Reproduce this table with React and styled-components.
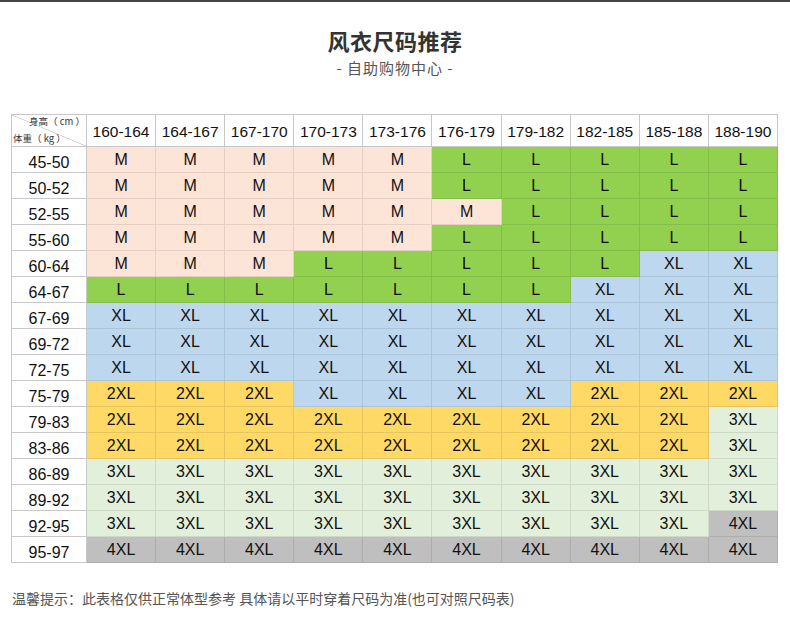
import styled, { createGlobalStyle } from "styled-components"

const GlobalStyle = createGlobalStyle`
  body {
    margin: 0;
    background: #fff;
    font-family: "Liberation Sans", Arial, "Noto Sans CJK SC", sans-serif;
    color: #111;
  }
`

const Page = styled.div`
  width: 790px;
  height: 639px;
  border-top: 2px solid #444;
  box-sizing: border-box;
  display: flex;
  flex-direction: column;
  overflow: hidden;
`

const Heading = styled.div`
  display: flex;
  flex-direction: column;
  align-items: center;
  padding-top: 25px;
  height: 82px;
  box-sizing: border-box;
`

const Title = styled.h1`
  margin: 0;
  font-family: "Noto Sans CJK SC", sans-serif;
  font-size: 22px;
  line-height: 26px;
  font-weight: 700;
  color: #333;
  letter-spacing: 0.5px;
`

const Subtitle = styled.div`
  margin-top: 5px;
  font-family: "Noto Sans CJK SC", sans-serif;
  font-size: 15px;
  line-height: 20px;
  color: #555;
  letter-spacing: 1px;
  white-space: pre;
`

const Table = styled.div`
  margin: 30px 0 0 11px;
  width: 767px;
  display: grid;
  grid-template-columns: 75px repeat(10, 1fr);
  grid-template-rows: 32px repeat(16, 26px);
  border-top: 1px solid #c8c8c8;
  border-left: 1px solid #c8c8c8;
  box-sizing: border-box;
`

const Cell = styled.div`
  box-sizing: border-box;
  border-right: 1px solid ${p => (p.$bg ? "rgba(0,0,0,0.09)" : "#c8c8c8")};
  border-bottom: 1px solid ${p => (p.$bg ? "rgba(0,0,0,0.09)" : "#c8c8c8")};
  background: ${p => p.$bg || "#fff"};
  display: flex;
  justify-content: center;
  align-items: center;
  font-size: 16px;
  line-height: 18px;
  color: #111;
`

const HeadCell = styled(Cell)`
  font-size: 15.5px;
  padding-top: 2px;
`

const RowLabel = styled(Cell)`
  align-items: flex-end;
`

const Corner = styled.div`
  box-sizing: border-box;
  border-right: 1px solid #c8c8c8;
  border-bottom: 1px solid #c8c8c8;
  background: linear-gradient(
    to top right,
    transparent calc(50% - 0.6px),
    #c4c4c4,
    transparent calc(50% + 0.6px)
  );
  display: flex;
  flex-direction: column;
  justify-content: space-between;
  padding: 0 1px 1px 1px;
  font-family: "Noto Sans CJK SC", sans-serif;
  font-size: 9.5px;
  line-height: 13px;
  color: #333;
  white-space: pre;
`

const CornerTop = styled.span`
  align-self: flex-end;
`

const CornerBottom = styled.span`
  align-self: flex-start;
`

const Note = styled.div`
  margin: 25px 0 0 12px;
  font-family: "Noto Sans CJK SC", sans-serif;
  font-size: 14px;
  line-height: 20px;
  color: #555;
`

const colors = {
  M: "#fce4d6",
  L: "#92d050",
  XL: "#bdd7ee",
  "2XL": "#ffd966",
  "3XL": "#e2efda",
  "4XL": "#bfbfbf",
}

const heights = [
  "160-164", "164-167", "167-170", "170-173", "173-176",
  "176-179", "179-182", "182-185", "185-188", "188-190",
]

const rep = (s, n) => Array(n).fill(s)

const rows = [
  ["45-50", [...rep("M", 5), ...rep("L", 5)]],
  ["50-52", [...rep("M", 5), ...rep("L", 5)]],
  ["52-55", [...rep("M", 6), ...rep("L", 4)]],
  ["55-60", [...rep("M", 5), ...rep("L", 5)]],
  ["60-64", [...rep("M", 3), ...rep("L", 5), ...rep("XL", 2)]],
  ["64-67", [...rep("L", 7), ...rep("XL", 3)]],
  ["67-69", rep("XL", 10)],
  ["69-72", rep("XL", 10)],
  ["72-75", rep("XL", 10)],
  ["75-79", [...rep("2XL", 3), ...rep("XL", 4), ...rep("2XL", 3)]],
  ["79-83", [...rep("2XL", 9), "3XL"]],
  ["83-86", [...rep("2XL", 9), "3XL"]],
  ["86-89", rep("3XL", 10)],
  ["89-92", rep("3XL", 10)],
  ["92-95", [...rep("3XL", 9), "4XL"]],
  ["95-97", rep("4XL", 10)],
]

function App() {
  return (
    <Page>
      <GlobalStyle />
      <Heading>
        <Title>风衣尺码推荐</Title>
        <Subtitle>- 自助购物中心 -</Subtitle>
      </Heading>

      <Table>
        <Corner>
          <CornerTop>身高（ cm ）</CornerTop>
          <CornerBottom>体重（ kg ）</CornerBottom>
        </Corner>
        {heights.map(h => (
          <HeadCell key={h}>{h}</HeadCell>
        ))}
        {rows.map(([w, sizes]) => [
          <RowLabel key={w}>{w}</RowLabel>,
          ...sizes.map((s, i) => (
            <Cell key={w + i} $bg={colors[s]}>{s}</Cell>
          )),
        ])}
      </Table>

      <Note>温馨提示：此表格仅供正常体型参考 具体请以平时穿着尺码为准(也可对照尺码表)</Note>
    </Page>
  )
}

export default App
